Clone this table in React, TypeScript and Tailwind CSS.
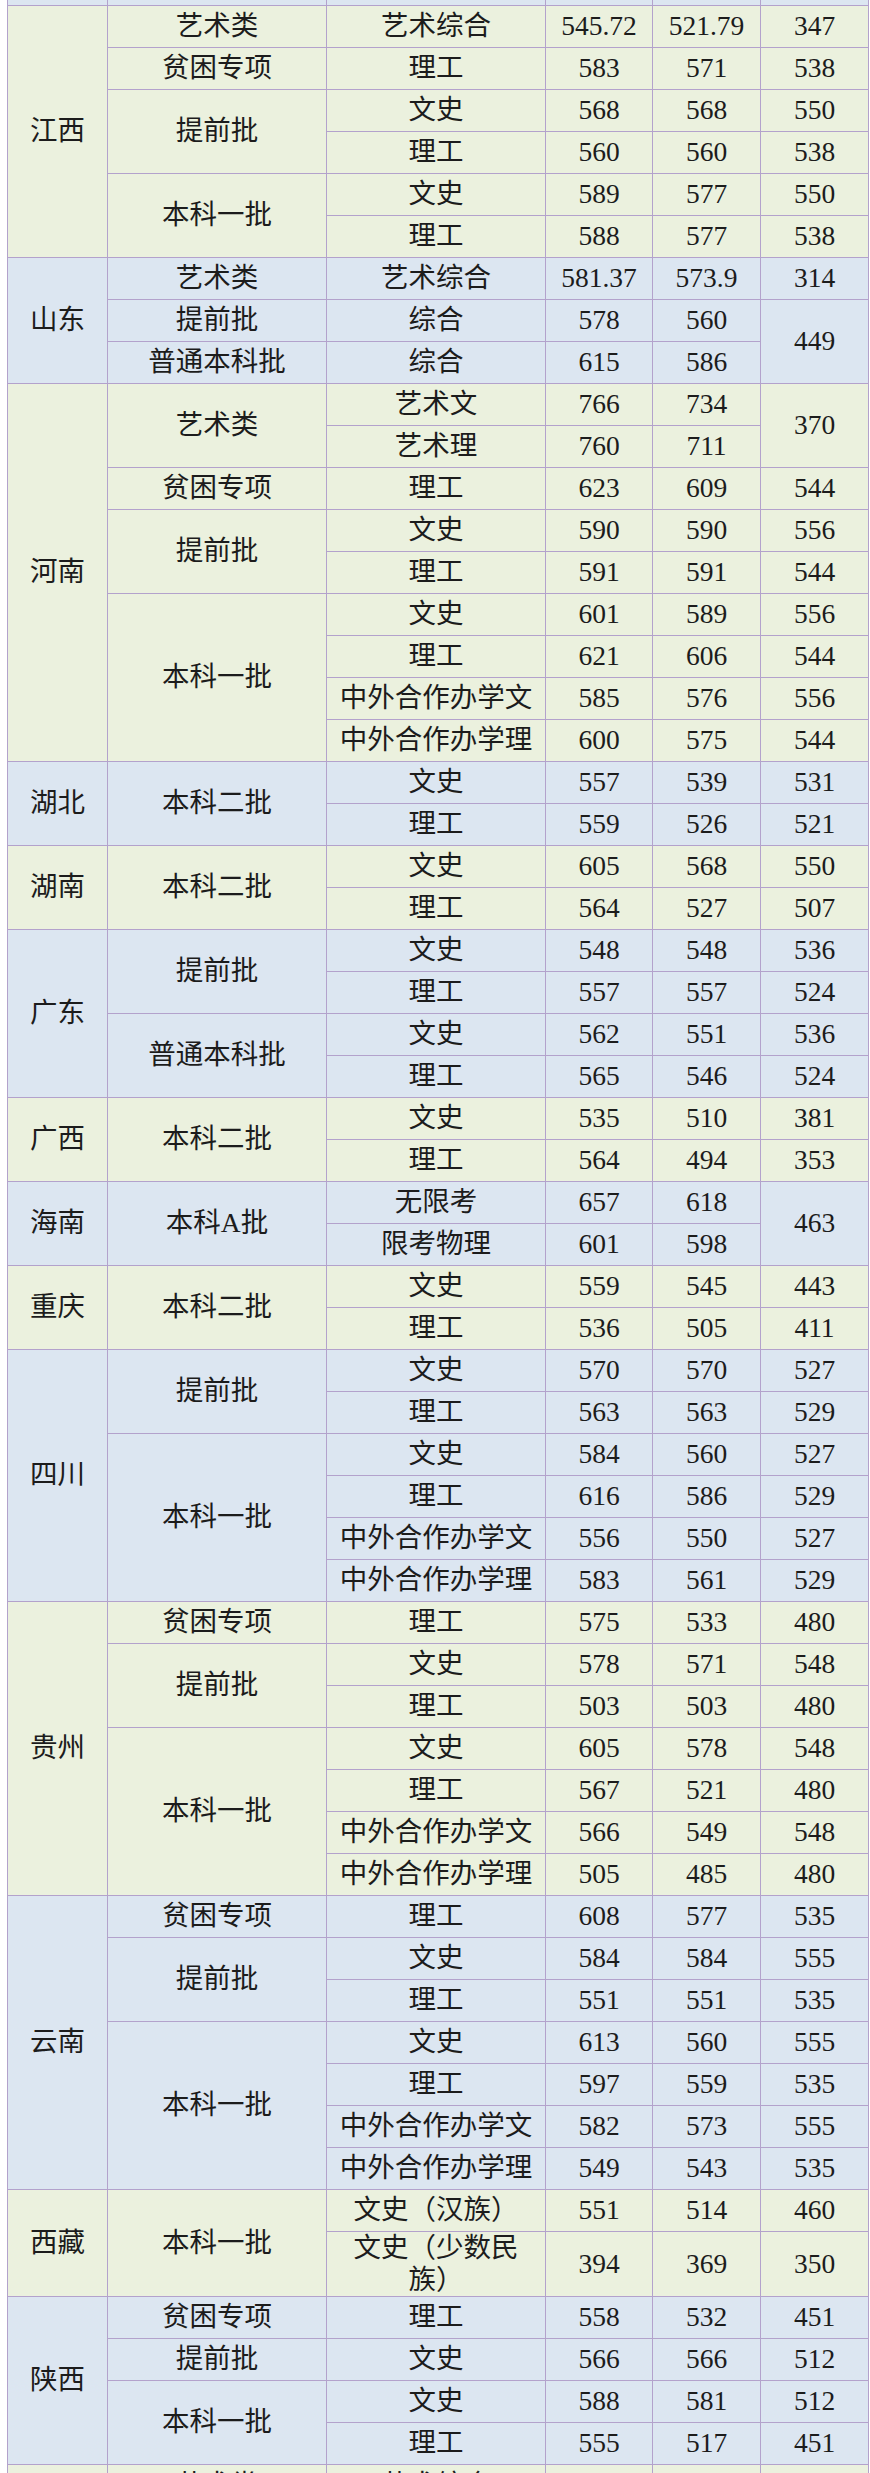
type Row = { sub: string; a: string; b: string; c?: string; cSpan?: number };
type Group = { batch: string; rows: Row[] };
type Prov = { name: string; groups: Group[] };

const r = (sub: string, a: string, b: string, c?: string, cSpan?: number): Row => ({ sub, a, b, c, cSpan });

const DATA: Prov[] = [
  {
    name: "江西",
    groups: [
      { batch: "艺术类", rows: [r("艺术综合", "545.72", "521.79", "347")] },
      { batch: "贫困专项", rows: [r("理工", "583", "571", "538")] },
      { batch: "提前批", rows: [r("文史", "568", "568", "550"), r("理工", "560", "560", "538")] },
      { batch: "本科一批", rows: [r("文史", "589", "577", "550"), r("理工", "588", "577", "538")] },
    ],
  },
  {
    name: "山东",
    groups: [
      { batch: "艺术类", rows: [r("艺术综合", "581.37", "573.9", "314")] },
      { batch: "提前批", rows: [r("综合", "578", "560", "449", 2)] },
      { batch: "普通本科批", rows: [r("综合", "615", "586")] },
    ],
  },
  {
    name: "河南",
    groups: [
      { batch: "艺术类", rows: [r("艺术文", "766", "734", "370", 2), r("艺术理", "760", "711")] },
      { batch: "贫困专项", rows: [r("理工", "623", "609", "544")] },
      { batch: "提前批", rows: [r("文史", "590", "590", "556"), r("理工", "591", "591", "544")] },
      {
        batch: "本科一批",
        rows: [
          r("文史", "601", "589", "556"),
          r("理工", "621", "606", "544"),
          r("中外合作办学文", "585", "576", "556"),
          r("中外合作办学理", "600", "575", "544"),
        ],
      },
    ],
  },
  {
    name: "湖北",
    groups: [{ batch: "本科二批", rows: [r("文史", "557", "539", "531"), r("理工", "559", "526", "521")] }],
  },
  {
    name: "湖南",
    groups: [{ batch: "本科二批", rows: [r("文史", "605", "568", "550"), r("理工", "564", "527", "507")] }],
  },
  {
    name: "广东",
    groups: [
      { batch: "提前批", rows: [r("文史", "548", "548", "536"), r("理工", "557", "557", "524")] },
      { batch: "普通本科批", rows: [r("文史", "562", "551", "536"), r("理工", "565", "546", "524")] },
    ],
  },
  {
    name: "广西",
    groups: [{ batch: "本科二批", rows: [r("文史", "535", "510", "381"), r("理工", "564", "494", "353")] }],
  },
  {
    name: "海南",
    groups: [{ batch: "本科A批", rows: [r("无限考", "657", "618", "463", 2), r("限考物理", "601", "598")] }],
  },
  {
    name: "重庆",
    groups: [{ batch: "本科二批", rows: [r("文史", "559", "545", "443"), r("理工", "536", "505", "411")] }],
  },
  {
    name: "四川",
    groups: [
      { batch: "提前批", rows: [r("文史", "570", "570", "527"), r("理工", "563", "563", "529")] },
      {
        batch: "本科一批",
        rows: [
          r("文史", "584", "560", "527"),
          r("理工", "616", "586", "529"),
          r("中外合作办学文", "556", "550", "527"),
          r("中外合作办学理", "583", "561", "529"),
        ],
      },
    ],
  },
  {
    name: "贵州",
    groups: [
      { batch: "贫困专项", rows: [r("理工", "575", "533", "480")] },
      { batch: "提前批", rows: [r("文史", "578", "571", "548"), r("理工", "503", "503", "480")] },
      {
        batch: "本科一批",
        rows: [
          r("文史", "605", "578", "548"),
          r("理工", "567", "521", "480"),
          r("中外合作办学文", "566", "549", "548"),
          r("中外合作办学理", "505", "485", "480"),
        ],
      },
    ],
  },
  {
    name: "云南",
    groups: [
      { batch: "贫困专项", rows: [r("理工", "608", "577", "535")] },
      { batch: "提前批", rows: [r("文史", "584", "584", "555"), r("理工", "551", "551", "535")] },
      {
        batch: "本科一批",
        rows: [
          r("文史", "613", "560", "555"),
          r("理工", "597", "559", "535"),
          r("中外合作办学文", "582", "573", "555"),
          r("中外合作办学理", "549", "543", "535"),
        ],
      },
    ],
  },
  {
    name: "西藏",
    groups: [{ batch: "本科一批", rows: [r("文史（汉族）", "551", "514", "460"), r("文史（少数民族）", "394", "369", "350")] }],
  },
  {
    name: "陕西",
    groups: [
      { batch: "贫困专项", rows: [r("理工", "558", "532", "451")] },
      { batch: "提前批", rows: [r("文史", "566", "566", "512")] },
      { batch: "本科一批", rows: [r("文史", "588", "581", "512"), r("理工", "555", "517", "451")] },
    ],
  },
];

const GREEN = "bg-[#EBF1DE]";
const BLUE = "bg-[#DCE6F1]";
const td = "border border-[#B3A2CC] px-1 py-0 text-center align-middle";

export default function App() {
  return (
    <div className="w-[870px] bg-white pl-[7px] font-['Liberation_Serif','Noto_Sans_CJK_SC',serif] text-[27.5px] leading-[32px] text-[#1c1c1c] [text-spacing-trim:space-all]">
      <table className="w-[861px] table-fixed border-collapse">
        <colgroup>
          <col className="w-[100px]" />
          <col className="w-[219px]" />
          <col className="w-[219px]" />
          <col className="w-[107px]" />
          <col className="w-[108px]" />
          <col className="w-[108px]" />
        </colgroup>
        <tbody>
          {/* 위에서 잘린 이전 성 마지막 줄 */}
          <tr className={`h-[5px] ${BLUE}`}>
            {[0, 1, 2, 3, 4, 5].map((i) => (
              <td key={i} className="border border-t-0 border-[#B3A2CC] p-0" />
            ))}
          </tr>
          {DATA.map((p, pi) => {
            const bg = pi % 2 === 0 ? GREEN : BLUE;
            const total = p.groups.reduce((n, g) => n + g.rows.length, 0);
            return p.groups.flatMap((g, gi) =>
              g.rows.map((row, ri) => {
                const firstOfProv = gi === 0 && ri === 0;
                return (
                  <tr key={`${p.name}-${gi}-${ri}`} className={`h-[42px] ${bg}`}>
                    {firstOfProv && (
                      <td rowSpan={total} className={td}>
                        {p.name}
                      </td>
                    )}
                    {ri === 0 && (
                      <td rowSpan={g.rows.length} className={td}>
                        {g.batch}
                      </td>
                    )}
                    <td className={td}>{row.sub}</td>
                    <td className={td}>{row.a}</td>
                    <td className={td}>{row.b}</td>
                    {row.c !== undefined && (
                      <td rowSpan={row.cSpan ?? 1} className={td}>
                        {row.c}
                      </td>
                    )}
                  </tr>
                );
              })
            );
          })}
          {/* 아래에서 잘린 다음 성 첫 줄 */}
          <tr className={`h-[42px] ${GREEN}`}>
            <td className={td} />
            <td className={td}>艺术类</td>
            <td className={td}>艺术综合</td>
            <td className={td} />
            <td className={td} />
            <td className={td} />
          </tr>
        </tbody>
      </table>
    </div>
  );
}
